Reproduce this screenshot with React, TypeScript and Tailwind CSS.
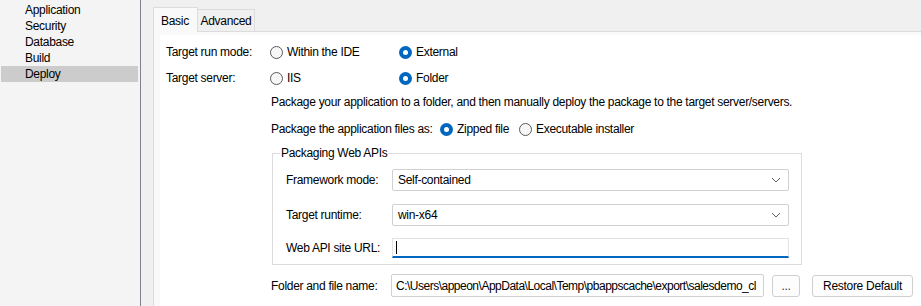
import React from "react"

// ── Small controls ─────────────────────────────────────────────────────────────

function Radio({ checked, label }: { checked?: boolean; label: string }) {
  return (
    <div className="flex items-center whitespace-nowrap">
      {checked ? (
        <span className="w-[13px] h-[13px] rounded-full bg-[#0067c0] flex items-center justify-center shrink-0">
          <span className="w-[5px] h-[5px] rounded-full bg-white" />
        </span>
      ) : (
        <span className="w-[13px] h-[13px] rounded-full border border-[#5a5a5a] bg-[#f7f7f7] shrink-0" />
      )}
      <span className="ml-[4px]">{label}</span>
    </div>
  )
}

function Combo({ value }: { value: string }) {
  return (
    <div className="w-[397px] h-[22px] flex items-center justify-between border border-[#d0d0d0] rounded-[2px] bg-white pl-[5px] pr-[7px]">
      <span>{value}</span>
      <svg width="10" height="6" viewBox="0 0 10 6" className="shrink-0">
        <path d="M1 1 L5 5 L9 1" fill="none" stroke="#606060" strokeWidth="1" />
      </svg>
    </div>
  )
}

function Button({ children, className }: { children: React.ReactNode; className?: string }) {
  return (
    <div
      className={
        "h-[22px] flex items-center justify-center border border-[#cfcfcf] rounded-[3px] bg-[#fdfdfd] shrink-0 " +
        (className ?? "")
      }
    >
      {children}
    </div>
  )
}

// ── Page ───────────────────────────────────────────────────────────────────────

const NAV = ["Application", "Security", "Database", "Build", "Deploy"]

export default function App() {
  return (
    <div
      className="w-[921px] h-[306px] flex overflow-hidden text-[12px] tracking-[-0.3px] text-black bg-[#f0f0f0]"
      style={{ fontFamily: '"Liberation Sans", Arial, sans-serif' }}
    >
      {/* Left nav */}
      <div className="w-[141px] shrink-0 bg-[#f4f4f4] border-r border-[#7e828a] pt-[2px] pl-[1px] pr-[2px]">
        {NAV.map(n => (
          <div
            key={n}
            className={"h-[16px] flex items-center pl-[24px] " + (n === "Deploy" ? "bg-[#cccccc]" : "")}
          >
            {n}
          </div>
        ))}
      </div>

      {/* Right side */}
      <div className="flex-1 flex flex-col pl-[12px]">
        {/* Tabs */}
        <div className="h-[31px] flex items-end shrink-0">
          <div className="h-[25px] w-[45px] bg-[#f9f9f9] border border-b-0 border-[#dcdcdc] pl-[7px] pt-[4px] relative z-10 mb-[-1px]">
            Basic
          </div>
          <div className="h-[22px] w-[57px] bg-[#f0f0f0] border border-l-0 border-b-0 border-[#dcdcdc] flex items-center justify-center">
            Advanced
          </div>
        </div>

        {/* Tab page */}
        <div className="flex-1 border-t border-l border-[#dcdcdc] bg-[#f9f9f9] pt-[3px] pl-[6px]">
          <div className="h-full bg-white pl-[6px] pt-[6px]">
            <div className="h-[22px] flex items-center">
              <span className="w-[104px]">Target run mode:</span>
              <div className="w-[129px]">
                <Radio label="Within the IDE" />
              </div>
              <Radio checked label="External" />
            </div>
            <div className="h-[22px] mt-[4px] flex items-center">
              <span className="w-[104px]">Target server:</span>
              <div className="w-[129px]">
                <Radio label="IIS" />
              </div>
              <Radio checked label="Folder" />
            </div>

            <div className="pl-[105px]">
              <div className="h-[22px] mt-[2px] flex items-center whitespace-nowrap">
                Package your application to a folder, and then manually deploy the package to the target server/servers.
              </div>
              <div className="h-[22px] mt-[5px] flex items-center whitespace-nowrap">
                <span className="w-[169px] shrink-0">Package the application files as:</span>
                <div className="w-[79px] shrink-0">
                  <Radio checked label="Zipped file" />
                </div>
                <Radio label="Executable installer" />
              </div>

              <fieldset className="w-[530px] h-[121px] mt-[4px] ml-[1px] border border-[#dcdcdc] pl-[13px] pr-[11px]">
                <legend className="ml-[-6px] px-[1px]">Packaging Web APIs</legend>
                <div className="flex items-center mt-[7px]">
                  <span className="w-[106px]">Framework mode:</span>
                  <Combo value="Self-contained" />
                </div>
                <div className="flex items-center mt-[13px]">
                  <span className="w-[106px]">Target runtime:</span>
                  <Combo value="win-x64" />
                </div>
                <div className="flex items-center mt-[12px]">
                  <span className="w-[106px]">Web API site URL:</span>
                  <div className="w-[397px] h-[20px] border border-[#e3e3e3] border-b-2 border-b-[#0067c0] bg-white flex items-center pl-[3px]">
                    <span className="w-[1px] h-[13px] bg-black" />
                  </div>
                </div>
              </fieldset>

              <div className="flex items-center mt-[9px]">
                <span className="w-[120px] shrink-0">Folder and file name:</span>
                <div className="w-[373px] h-[23px] shrink-0 border border-[#d0d0d0] rounded-[2px] bg-white flex items-center pl-[4px] overflow-hidden">
                  <span className="whitespace-nowrap tracking-[-0.5px]">
                    C:\Users\appeon\AppData\Local\Temp\pbappscache\export\salesdemo_cl
                  </span>
                </div>
                <Button className="w-[28px] ml-[8px] text-[#333]">...</Button>
                <Button className="w-[101px] ml-[12px]">Restore Default</Button>
              </div>
            </div>
          </div>
        </div>
      </div>
    </div>
  )
}
